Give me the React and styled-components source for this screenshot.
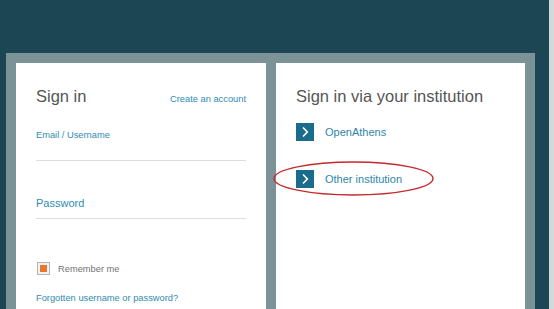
import React from "react";
import styled, { createGlobalStyle } from "styled-components";

const Global = createGlobalStyle`
  html, body {
    margin: 0;
    padding: 0;
    background: #1d4654;
    overflow: hidden;
    font-family: "Liberation Sans", Arial, sans-serif;
  }
`;

const Page = styled.div`
  display: flex;
  height: 309px;
`;

const Main = styled.div`
  flex: 1;
  padding: 53px 0 0 6px;
`;

const EdgeStrip = styled.div`
  width: 5px;
  background: #d3dadc;
`;

const Panel = styled.div`
  width: 509px;
  min-height: 260px;
  padding: 10px;
  display: flex;
  gap: 10px;
  background: #7b9396;
`;

const Card = styled.div`
  width: ${(p) => p.$w}px;
  background: #ffffff;
  padding: 23px 20px 0;
  box-sizing: border-box;
  position: relative;
`;

const CardHeader = styled.div`
  display: flex;
  justify-content: space-between;
  align-items: baseline;
`;

const Heading = styled.h2`
  margin: 0;
  font-size: 16.5px;
  line-height: 20px;
  font-weight: normal;
  color: #555555;
`;

const SmallLink = styled.a`
  font-size: 9.3px;
  line-height: 12px;
  color: #2f8bb1;
  text-decoration: none;
`;

const Field = styled.div`
  margin-top: ${(p) => p.$mt}px;
  border-bottom: 1px solid #dedede;
`;

const Label = styled.div`
  font-size: 9.3px;
  line-height: 12px;
  color: #2f8bb1;
`;

const InputArea = styled.div`
  height: 19px;
`;

const Placeholder = styled.div`
  font-size: 11px;
  line-height: 13px;
  padding-bottom: 8px;
  color: #2f8bb1;
`;

const CheckRow = styled.div`
  margin-top: 43px;
  display: flex;
  align-items: center;
  gap: 8px;
  height: 13px;
  padding-left: 1px;
`;

const CheckBox = styled.span`
  width: 13px;
  height: 13px;
  box-sizing: border-box;
  border: 1px solid #b5b5b5;
  background: #f2f2f2;
  display: flex;
  align-items: center;
  justify-content: center;
  &::after {
    content: "";
    width: 7px;
    height: 7px;
    background: #e8792c;
  }
`;

const CheckText = styled.span`
  font-size: 9.3px;
  color: #747474;
`;

const Forgot = styled(SmallLink)`
  display: block;
  margin-top: 17px;
`;

const List = styled.div`
  margin-top: 17px;
  display: flex;
  flex-direction: column;
  gap: 29px;
`;

const Row = styled.div`
  position: relative;
  display: flex;
  align-items: center;
  gap: 11px;
  height: 18px;
`;

const IconBox = styled.span`
  width: 18px;
  height: 18px;
  background: #1b6b8c;
  display: flex;
  align-items: center;
  justify-content: center;
`;

const RowText = styled.span`
  font-size: 11px;
  color: #2e86aa;
`;

const Ellipse = styled.svg`
  position: absolute;
  left: -23px;
  top: -9px;
  overflow: visible;
  pointer-events: none;
`;

const Chevron = () => (
  <svg width="18" height="18" viewBox="0 0 18 18">
    <path d="M7 4.5 L11.3 9 L7 13.5" fill="none" stroke="#fff" strokeWidth="1.6" />
  </svg>
);

export default function App() {
  return (
    <>
      <Global />
      <Page>
        <Main>
          <Panel>
            <Card $w={250}>
              <CardHeader>
                <Heading>Sign in</Heading>
                <SmallLink>Create an account</SmallLink>
              </CardHeader>
              <Field $mt={23}>
                <Label>Email / Username</Label>
                <InputArea />
              </Field>
              <Field $mt={36}>
                <Placeholder>Password</Placeholder>
              </Field>
              <CheckRow>
                <CheckBox />
                <CheckText>Remember me</CheckText>
              </CheckRow>
              <Forgot>Forgotten username or password?</Forgot>
            </Card>
            <Card $w={249}>
              <Heading>Sign in via your institution</Heading>
              <List>
                <Row>
                  <IconBox>
                    <Chevron />
                  </IconBox>
                  <RowText>OpenAthens</RowText>
                </Row>
                <Row>
                  <IconBox>
                    <Chevron />
                  </IconBox>
                  <RowText>Other institution</RowText>
                  <Ellipse width="161" height="35" viewBox="0 0 161 35">
                    <ellipse cx="80.5" cy="17.5" rx="79.5" ry="16.5" fill="none" stroke="#c42a2e" strokeWidth="1.4" />
                  </Ellipse>
                </Row>
              </List>
            </Card>
          </Panel>
        </Main>
        <EdgeStrip />
      </Page>
    </>
  );
}
